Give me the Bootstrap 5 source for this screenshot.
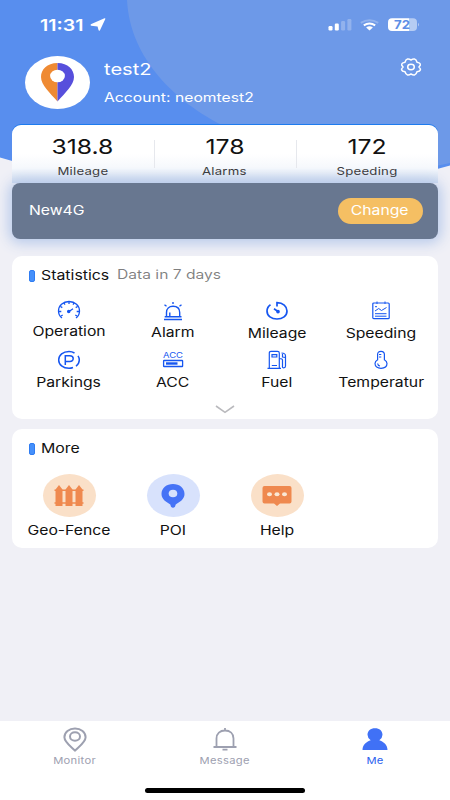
<!DOCTYPE html>
<html lang="en">
<head>
<meta charset="utf-8">
<meta name="viewport" content="width=device-width, initial-scale=1">
<title>Me</title>
<link href="https://cdn.jsdelivr.net/npm/bootstrap@5.3.0/dist/css/bootstrap.min.css" rel="stylesheet">
<style>
body{font-family:Inter,"Liberation Sans",sans-serif;background:#f0f0f6;color:#111;height:800px;overflow:hidden;line-height:1}
svg{display:block;flex:none}
.screen{width:450px;height:800px;isolation:isolate}
.backdrop{top:0;left:0;z-index:-1}
/* wide lettering: glyphs are stretched horizontally */
.wx{display:inline-block;transform:scaleX(1.22);white-space:nowrap}
.wl{transform-origin:left center}
.statusbar{height:48px;padding:1px 30px 0 40px}
.clock{font-size:16px;font-weight:600;width:50px;transform:scaleX(1.22)}
.profile{height:77px;padding:8px 28px 0 25px}
.gear{margin-top:2px}
.who{margin-left:14px}
.uname{font-size:16.5px;margin-top:5px}
.acct{font-size:12.8px;margin-top:14px;letter-spacing:.05px}
.panel{background:#fff;border-radius:10px;margin:0 12px 0 11.5px}
.summary{height:58px;border-radius:9px 9px 0 0;background:linear-gradient(#fff 50%,#f5f8fc 75%,#ccd9ed);box-shadow:0 -1px 0 #1d7bee}
.summary>div{width:142.2px}
.summary>div+div::before{content:"";position:absolute;left:0;top:15px;height:28px;border-left:1px solid #e6e8ed}
.num{font-size:20.3px;margin-top:12px}
.cap{font-size:10.8px;margin-top:9.500px;color:#3c3c40;letter-spacing:.2px}
.device{height:55.500px;margin:0 12px 0 11.5px;background:#687790;border-radius:8px;color:#fff;padding:1px 15.5px 0 17.5px;font-size:12.9px;box-shadow:0 1px 14px 3px #b5c8ea}
.change{background:#f5bf63;border-radius:14px;width:85px;height:26px;color:#fff;padding-top:1px;margin-bottom:1px}
.stats{height:163px;margin-top:17px}
.more{height:119px;margin-top:10px}
.head{padding:0 0 0 17.5px;font-size:13px;height:40px}
.stitle{width:76px}
.sub{font-size:12.8px}
.tick{width:6px;height:12px;border-radius:2px;background:#4590fb;border:1px solid #2f7cf2;margin-right:6px}
.cells>div{width:104px;font-size:12.9px}
.cells{margin-left:5.5px}
.row-a>div{padding-top:5px}
.row-a .wx{margin-top:6px}
.row-a>div:nth-child(1){padding-top:4px}
.row-a>div:nth-child(n+3) .wx{margin-top:7px}
.row-b{height:49px}
.row-a{height:45px}
.row-b>div{padding-top:9px}
.row-b .wx{margin-top:7px}
.chev{margin-top:15px}
.round{width:53px;height:43px;border-radius:50%}
.r-orange{background:#fae0c8}
.r-blue{background:#d8e2fc}
.row-c{margin-top:5.5px}
.row-c .wx{margin-top:8px}
.tabs{height:79.500px;background:#fff;margin-top:auto;color:#9da0b0;font-size:9.2px}
.tabs svg{margin-top:6.500px}
.tabs .wx{letter-spacing:.25px;margin-top:4px}
.tab-on{color:#2a60ee}
.home{width:160px;height:4.6px;border-radius:3px;background:#000;bottom:7.500px;left:145px}
</style>
<script src="https://cdn.jsdelivr.net/npm/bootstrap@5.3.0/dist/js/bootstrap.bundle.min.js"></script>
</head>
<body>
<div class="screen d-flex flex-column position-relative">
<svg class="backdrop position-absolute" width="450" height="180"><path d="M0 0H450V165.500L439 168.500Q225 225 0 157.500Z" fill="#588eee"/><path d="M127 0C130 60 178 103 222 125C290 160 370 182 450 163V0Z" fill="#6d99e8"/></svg>

<header class="statusbar d-flex align-items-center text-white">
<span class="wx wl clock">11:31</span>
<svg width="16" height="14" viewBox="0 0 16 14" class="me-auto"><path d="M.8 6.200L14.500 .3Q15.800 0 15.200 1.200L10 12.200Q9 13.500 8.500 12L7.600 8.600L1.200 7.800Q.1 7.200 .8 6.200Z" fill="#fff"/></svg>
<svg width="92" height="14" viewBox="0 0 92 14"><g fill="#fff"><rect x=".5" y="8" width="4" height="4.500" rx="1.200"/><rect x="6.800" y="5.500" width="4" height="7" rx="1.200"/><g opacity=".25"><rect x="13.100" y="3" width="4" height="9.500" rx="1.200"/><rect x="19.400" y="1" width="4" height="11.500" rx="1.200"/></g></g>
<g fill="none" stroke="#fff" stroke-width="2"><path d="M32.800 4.800Q41.500 -.5 50.200 4.800" opacity=".25"/><path d="M35.800 7.400Q41.500 3.500 47.200 7.400"/></g><path d="M38.100 9.500Q41.500 7.200 44.900 9.500L41.500 12.600Z" fill="#fff"/>
<path d="M64 .3H81V13H64Q60 13 60 9V4.300Q60 .3 64 .3Z" fill="#fff"/><path d="M81 .3H85Q89 .3 89 4.300V9Q89 13 85 13H81Z" fill="#b6ccf3"/><path d="M90 4.800Q92 6.600 90 8.500Z" fill="#b6ccf3"/><text x="74" y="10.800" text-anchor="middle" font-size="11.500" font-weight="700" textLength="16" lengthAdjust="spacingAndGlyphs" fill="#5e8fe6">72</text></svg>
</header>

<section class="profile d-flex text-white">
<svg width="65" height="53" viewBox="0 0 65 53"><ellipse cx="32.500" cy="26.500" rx="32.500" ry="26.500" fill="#fff"/><path d="M32.500 7C22 7 16 13.500 16 21C16 29 25 37 32.500 45.500Z" fill="#ef8a33"/><path d="M32.500 7C43 7 49 13.500 49 21C49 29 40 37 32.500 45.500Z" fill="#574fdc"/><ellipse cx="32.500" cy="20" rx="7.400" ry="6.300" fill="#fff"/></svg>
<div class="who d-flex flex-column align-items-start me-auto"><span class="wx wl uname">test2</span><span class="wx wl acct">Account: neomtest2</span></div>
<svg class="gear" width="22" height="18" viewBox="0 0 22 18" fill="none" stroke="#fff" stroke-width="1.500"><path d="M7.500 1.100Q9 .8 11 2Q13 .8 14.500 1.100Q16.300 1.500 17 4.200Q20 4.700 20.300 6Q20.800 7 19 9Q20.800 11 20.300 12Q20 13.300 17 13.800Q16.300 16.500 14.500 16.900Q13 17.200 11 16Q9 17.200 7.500 16.900Q5.700 16.500 5 13.800Q2 13.300 1.700 12Q1.200 11 3 9Q1.200 7 1.700 6Q2 4.700 5 4.200Q5.700 1.500 7.500 1.100Z"/><ellipse cx="11" cy="9" rx="3.300" ry="2.700"/></svg>
</section>

<section class="panel summary d-flex text-center">
<div class="d-flex flex-column align-items-center"><span class="wx num">318.8</span><span class="wx cap">Mileage</span></div>
<div class="d-flex flex-column align-items-center position-relative"><span class="wx num">178</span><span class="wx cap">Alarms</span></div>
<div class="d-flex flex-column align-items-center position-relative"><span class="wx num">172</span><span class="wx cap">Speeding</span></div>
</section>
<section class="device d-flex align-items-center justify-content-between"><span class="wx wl">New4G</span><span class="change d-flex align-items-center justify-content-center"><span class="wx">Change</span></span></section>

<section class="panel stats">
<div class="head d-flex align-items-center"><i class="tick"></i><span class="wx wl stitle">Statistics</span><span class="wx wl sub text-black-50">Data in 7 days</span></div>
<div class="cells row-a d-flex text-center">
<div class="d-flex flex-column align-items-center"><svg width="24" height="20" viewBox="0 0 24 20" fill="none" stroke="#1656f0" stroke-width="1.300"><path d="M5 18Q1.500 15.500 1.500 11C1.500 5.500 6 1.500 12 1.500S22.500 5.500 22.500 11Q22.500 15.500 19 18"/><path d="M12 2V4M7 3L8 4.700M17 3L16 4.700M3.500 6.500L5.300 7.600M20.500 6.500L18.700 7.600M2 11.500H4.300M22 11.500H19.700M4 16L5.700 15M20 16L18.300 15M12 11.500L16 8.700"/><circle cx="11.700" cy="11.500" r="1.100" fill="#1656f0"/></svg><span class="wx">Operation</span></div>
<div class="d-flex flex-column align-items-center"><svg width="24" height="20" viewBox="0 0 24 20" fill="none" stroke="#1656f0" stroke-width="1.400"><path d="M3 18.500H21M5.500 15.700H18.700V11.500C18.700 7.500 16 5.300 12 5.300S5.500 7.500 5.500 11.500ZM3.700 15.700H20.500M8.800 15V11.500M12 1V3M3.500 3.800L5.500 5.300M20.500 3.800L18.500 5.300"/></svg><span class="wx">Alarm</span></div>
<div class="d-flex flex-column align-items-center"><svg width="24" height="20" viewBox="0 0 24 20" fill="none" stroke="#1656f0" stroke-width="1.700"><path d="M5.500 3.700Q2 6 2 10C2 15 6.500 18 12 18S22 15 22 10C22 5.300 18 1.700 12 1.700V5.500M9 7.800L13 10.500"/><circle cx="13" cy="10.600" r="1" fill="#1656f0"/></svg><span class="wx">Mileage</span></div>
<div class="d-flex flex-column align-items-center"><svg width="20" height="20" viewBox="0 0 20 20" fill="none" stroke="#1656f0" stroke-width="1.200"><rect x="1.800" y="2" width="16.400" height="15.700" rx="1"/><path d="M6 .5V3M14 .5V3M4 10L7.700 7.500L10.500 9.500L15.500 6.500M4 5.700H6M4 12.700H15.500M4 15.200H15.500" stroke-width="1"/></svg><span class="wx">Speeding</span></div>
</div>
<div class="cells row-b d-flex text-center">
<div class="d-flex flex-column align-items-center"><svg width="24" height="20" viewBox="0 0 24 20" fill="none" stroke="#1656f0" stroke-width="1.500"><path d="M17.500 3Q15 1.500 12 1.500C6 1.500 1.700 5.200 1.700 10S6 18.300 12 18.300Q14 18.300 16 17.500M19 16.300Q22.300 13.500 22.300 10Q22.300 7.700 21 5.800"/><path d="M8.300 15V5.800H12.800Q16.200 5.800 16.200 8.600T12.800 11.400H8.500"/></svg><span class="wx">Parkings</span></div>
<div class="d-flex flex-column align-items-center"><svg width="24" height="20" viewBox="0 0 24 20"><text x="2" y="8" font-size="7.600" textLength="20" lengthAdjust="spacingAndGlyphs" fill="#1656f0">ACC</text><rect x="2.600" y="10.500" width="19" height="6" rx=".6" fill="none" stroke="#1656f0" stroke-width="1.300"/><rect x="5" y="12.300" width="11.500" height="2.400" fill="#1656f0"/></svg><span class="wx">ACC</span></div>
<div class="d-flex flex-column align-items-center"><svg width="22" height="20" viewBox="0 0 22 20" fill="none" stroke="#1656f0" stroke-width="1.200"><path d="M1.500 18.300H15M3.300 18V3Q3.300 1.300 5 1.300H11.500Q13.300 1.300 13.300 3V18M6 4.700H10.800V7H6ZM5.800 15.500H11M15.500 3Q19.500 3 19.500 6V16Q19.500 17.800 17.800 17.800T16.500 16V10Q16.500 8.500 13.500 8.500M16.500 4V7L19.500 7.500"/></svg><span class="wx">Fuel</span></div>
<div class="d-flex flex-column align-items-center"><svg width="20" height="20" viewBox="0 0 20 20" fill="none" stroke="#1656f0" stroke-width="1.200"><path d="M6.600 9.800V4.500Q6.600 1.300 10 1.300T13.400 4.500V9.800Q16 11.300 16 13.600C16 16.500 13.400 18.300 10 18.300S4 16.500 4 13.600Q4 11.300 6.600 9.800ZM8 4.500H10.300M8 7H10.300M6.600 13.500Q6.800 15.600 9 16"/></svg><span class="wx">Temperatur</span></div>
</div>
<svg class="chev mx-auto" width="20" height="9" viewBox="0 0 20 9" fill="none" stroke="#b9b9bd" stroke-width="1.600"><path d="M1 1L10 7.300L19 1"/></svg>
</section>

<section class="panel more">
<div class="head d-flex align-items-center"><i class="tick"></i><span class="wx wl">More</span></div>
<div class="cells row-c d-flex text-center">
<div class="d-flex flex-column align-items-center"><span class="round r-orange d-flex align-items-center justify-content-center"><svg width="30" height="23" viewBox="0 0 30 23" fill="#ef894f"><path d="M1.500 5.500L5 1L8.500 5.500V22H1.500ZM11.500 5.500L15 1L18.500 5.500V22H11.500ZM21.500 5.500L25 1L28.500 5.500V22H21.500Z"/><path d="M.5 5.500H29.500V7H.5ZM.5 18.200H29.500V19.700H.5Z"/></svg></span><span class="wx">Geo-Fence</span></div>
<div class="d-flex flex-column align-items-center"><span class="round r-blue d-flex align-items-center justify-content-center"><svg width="24" height="26" viewBox="0 0 24 26"><path d="M12 1C18.500 1 23.500 5 23.500 11C23.500 16.500 18.500 19 14.700 21.500L14 23.800Q12 25.700 10 23.800L9.300 21.500C5.500 19 .5 16.500 .5 11C.5 5 5.500 1 12 1Z" fill="#4673f6"/><ellipse cx="12" cy="10.500" rx="4.300" ry="3.800" fill="#d8e2fc"/></svg></span><span class="wx">POI</span></div>
<div class="d-flex flex-column align-items-center"><span class="round r-orange d-flex align-items-center justify-content-center"><svg width="30" height="22" viewBox="0 0 30 22"><path d="M2.500 1H27.500Q29.500 1 29.500 3V16.500Q29.500 18.500 27.500 18.500H18L15 21L12 18.500H2.500Q.5 18.500 .5 16.500V3Q.5 1 2.500 1Z" fill="#ef894f"/><g fill="#fae8d4"><ellipse cx="7.500" cy="9.300" rx="2.500" ry="2"/><ellipse cx="15" cy="9.300" rx="2.500" ry="2"/><ellipse cx="22.500" cy="9.300" rx="2.500" ry="2"/></g></svg></span><span class="wx">Help</span></div>
</div>
</section>

<nav class="tabs d-flex position-relative text-center">
<div class="col d-flex flex-column align-items-center"><svg width="24" height="25" viewBox="0 0 24 25" fill="none" stroke="#9da0b0" stroke-width="2"><path d="M12 1.500C18 1.500 22.600 5.400 22.600 10.200C22.600 15.200 16 19.500 12 23.500C8 19.500 1.400 15.200 1.400 10.200C1.400 5.400 6 1.500 12 1.500Z"/><ellipse cx="12" cy="9.500" rx="5" ry="4.200"/></svg><span class="wx">Monitor</span></div>
<div class="col d-flex flex-column align-items-center"><svg width="26" height="25" viewBox="0 0 26 25" fill="none" stroke="#9da0b0" stroke-width="1.800"><path d="M1.500 20H24.500M4.500 20V11.500C4.500 6.500 8 3.500 13 3.500S21.500 6.500 21.500 11.500V20M13 1V3.500M10.500 22.700H15.500"/></svg><span class="wx">Message</span></div>
<div class="col tab-on d-flex flex-column align-items-center"><svg width="26" height="25" viewBox="0 0 26 25" fill="#4071f6"><path d="M.5 23C.5 17.300 5 14.500 8.700 13.200Q5.500 11 5.500 7.800C5.500 4 8.500 1.300 13 1.300S20.500 4 20.500 7.800Q20.500 11 17.300 13.200C21 14.500 25.500 17.300 25.500 23Z"/></svg><span class="wx">Me</span></div>
<span class="home position-absolute"></span>
</nav>
</div>
</body>
</html>
